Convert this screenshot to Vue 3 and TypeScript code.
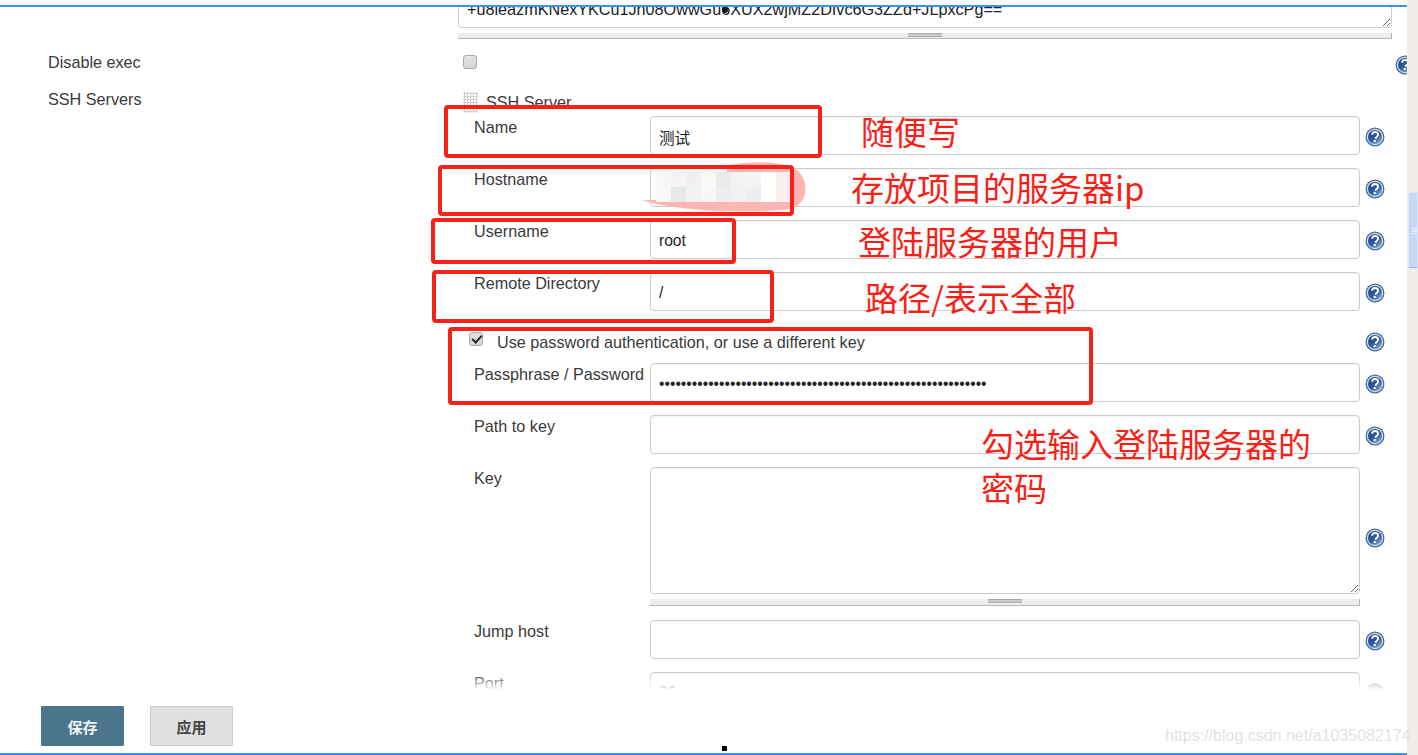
<script setup lang="ts">
interface Field { label: string; value: string }
const fieldsA: Field[] = [
  { label: 'Name', value: '测试' },
  { label: 'Hostname', value: '' },
  { label: 'Username', value: 'root' },
  { label: 'Remote Directory', value: '/' },
]
const password = 'x'.repeat(60)
const keyTail = '+u8leazmKNexYKCu1Jn08OwwGu6XUX2wjMZ2DIvc6G3ZZd+JLpxcPg=='
const boxes = [
  { x: 444, y: 105, w: 378, h: 53 },
  { x: 438, y: 165, w: 356, h: 51 },
  { x: 431, y: 218, w: 305, h: 46 },
  { x: 432, y: 270, w: 342, h: 53 },
  { x: 448, y: 327, w: 645, h: 78 },
]
const notes = [
  { x: 861, y: 107, text: '随便写' },
  { x: 851, y: 163, text: '存放项目的服务器ip' },
  { x: 858, y: 217, text: '登陆服务器的用户' },
  { x: 865, y: 273, text: '路径/表示全部' },
  { x: 981, y: 419, text: '勾选输入登陆服务器的' },
  { x: 981, y: 463, text: '密码' },
]
const mosaic = [
  '#f8f8f8', '#f5f5f5', '#f0f0f0', '#f9f9f9', '#ebebe9', '#f3f3f1', '#f2f4f6', '#ffffff', '#fdeeee',
  '#f8f8f8', '#e8e8e8', '#f2f2f2', '#f7f7f4', '#ecefef', '#f4f2f0', '#ebeff2', '#ffffff', '#fdeeee',
]
const tile = (i: number) => ({
  left: 656 + (i % 9) * 15 + 'px',
  top: 172 + Math.floor(i / 9) * 15 + 'px',
  background: mosaic[i],
})
</script>

<template>
  <div class="page">
    <svg class="defs" width="0" height="0" aria-hidden="true">
      <defs>
        <linearGradient id="hg" x1="0.2" y1="0.1" x2="0.8" y2="0.9">
          <stop offset="0" stop-color="#1f4a8c" />
          <stop offset="0.55" stop-color="#2f5c9c" />
          <stop offset="1" stop-color="#7f9fc6" />
        </linearGradient>
        <symbol id="help" viewBox="0 0 20 20">
          <circle cx="10" cy="10" r="9.5" fill="#456c9f" />
          <circle cx="10" cy="10" r="8.2" fill="#d5dfeb" />
          <circle cx="10" cy="10" r="7" fill="url(#hg)" />
          <path d="M7 7.6c.2-1.7 1.5-2.6 3.1-2.6 1.8 0 3 1.1 3 2.6 0 1.2-.7 1.8-1.5 2.4-.7.5-1 .9-1 1.7" fill="none" stroke="#fff" stroke-width="1.9" />
          <rect x="8.7" y="13" width="2" height="2" fill="#fff" />
        </symbol>
      </defs>
    </svg>

    <div class="main">
      <div class="top-gap"></div>
      <div class="rule"></div>

      <div class="viewport">
        <div class="key-top">
          <span class="key-line">{{ keyTail }}</span>
          <textarea class="key-input" readonly></textarea>
        </div>
        <div class="grippie top-grip"><span></span></div>

        <div class="section disable">
          <div class="side-label">Disable exec</div>
          <div class="side-body between">
            <input class="check" type="checkbox" />
            <svg class="help clipped"><use href="#help" /></svg>
          </div>
        </div>

        <div class="section servers">
          <div class="side-label">SSH Servers</div>
          <div class="side-body">
            <div class="ssh-head">
              <span class="dots"></span>
              <span>SSH Server</span>
            </div>
          </div>
        </div>

        <div class="fields">
          <div v-for="f in fieldsA" :key="f.label" class="field">
            <label>{{ f.label }}</label>
            <input class="text" readonly :value="f.value" />
            <svg class="help"><use href="#help" /></svg>
          </div>

          <div class="check-row">
            <input class="check" type="checkbox" checked />
            <span>Use password authentication, or use a different key</span>
            <svg class="help"><use href="#help" /></svg>
          </div>

          <div class="field">
            <label>Passphrase / Password</label>
            <input class="text" type="password" readonly :value="password" />
            <svg class="help"><use href="#help" /></svg>
          </div>
          <div class="field">
            <label>Path to key</label>
            <input class="text" readonly value="" />
            <svg class="help"><use href="#help" /></svg>
          </div>
          <div class="field tall">
            <label>Key</label>
            <div class="area-wrap">
              <textarea class="area" readonly></textarea>
              <div class="grippie"><span></span></div>
            </div>
            <svg class="help mid"><use href="#help" /></svg>
          </div>
          <div class="field">
            <label>Jump host</label>
            <input class="text" readonly value="" />
            <svg class="help"><use href="#help" /></svg>
          </div>
          <div class="field">
            <label>Port</label>
            <input class="text" readonly value="22" />
            <svg class="help"><use href="#help" /></svg>
          </div>
        </div>
        <div class="fade"></div>
      </div>

      <div class="actions">
        <button class="btn primary">保存</button>
        <button class="btn">应用</button>
      </div>
      <div class="rule"></div>
    </div>

    <div class="scrollbar">
      <div class="thumb"><i></i><i></i><i></i><i></i></div>
    </div>

    <!-- annotations drawn over the screenshot -->
    <svg class="smear" width="1418" height="755" aria-hidden="true">
      <path d="M642 200C680 213 760 213 792 209C810 201 810 176 792 167C772 160 750 162 727 165L727 172L656 172L656 200Z" fill="#ffb6b2" />
    </svg>
    <i v-for="(_, i) in mosaic" :key="i" class="tile" :style="tile(i)"></i>
    <div
      v-for="b in boxes"
      :key="b.y"
      class="box"
      :style="{ left: b.x + 'px', top: b.y + 'px', width: b.w + 'px', height: b.h + 'px' }"
    ></div>
    <div
      v-for="n in notes"
      :key="n.text"
      class="note"
      :style="{ left: n.x + 'px', top: n.y + 'px' }"
    >{{ n.text }}</div>

    <div class="mark"></div>
    <div class="caret"></div>
    <div class="watermark">https://blog.csdn.net/a1035082174</div>
  </div>
</template>

<style>
html, body { margin: 0; background: #fff; overflow: hidden; }
</style>

<style scoped>
.page {
  position: relative;
  display: flex;
  width: 1418px;
  height: 755px;
  overflow: hidden;
  background: #fff;
  color: #3a3a3a;
  font-family: "Liberation Sans", Arial, "Noto Sans CJK SC", sans-serif;
  font-size: 16.2px;
}
.defs { position: absolute; }
.main { width: 1407px; flex: none; display: flex; flex-direction: column; }
.top-gap { height: 5px; flex: none; }
.rule { height: 2px; flex: none; background: #3a93ee; }
.viewport { position: relative; height: 683px; flex: none; overflow: hidden; }

.key-top { position: relative; width: 934px; height: 40px; margin: -19px 0 0 458px; }
.key-input {
  display: block;
  box-sizing: border-box;
  width: 934px;
  height: 40px;
  padding: 0;
  border: 1px solid #ccc;
  border-radius: 4px;
  background: transparent;
  outline: none;
  resize: both;
  position: relative;
}
.key-line {
  position: absolute;
  left: 9px;
  top: 11px;
  font-size: 16.2px;
  line-height: 20px;
  color: #222;
  white-space: nowrap;
}
.grippie {
  box-sizing: border-box;
  height: 6px;
  background: #eee;
  border-bottom: 1px solid #b8b8b0;
  border-right: 1px solid #b8b8b0;
  display: flex;
  justify-content: center;
  align-items: flex-start;
}
.grippie span {
  width: 34px;
  height: 4px;
  border-top: 1px solid #aaa;
  border-bottom: 1px solid #aaa;
  box-sizing: border-box;
  background: #ccc;
}
.top-grip { width: 934px; margin: 5px 0 0 458px; }

.section { display: grid; grid-template-columns: 458px 949px; }
.side-label { padding-left: 48px; line-height: 20px; }
.side-body { min-width: 0; overflow: hidden; }
.between { display: flex; justify-content: space-between; padding-left: 5px; }
.disable { margin-top: 16px; height: 20px; }
.disable .side-label { margin-top: -3px; }
.servers { margin-top: 17px; height: 24px; overflow: visible; }
.servers .side-label { margin-top: -3px; }
.clipped { margin-right: -8px; }

.ssh-head { display: flex; align-items: center; gap: 8px; padding-left: 5px; height: 20px; }
.dots {
  width: 15px;
  height: 21px;
  flex: none;
  background-image: radial-gradient(#cfcfcf 1px, transparent 1.1px);
  background-size: 3px 3px;
}

.fields { display: flex; flex-direction: column; }
.field {
  display: grid;
  grid-template-columns: 192px 710px 20px;
  margin-left: 458px;
  margin-bottom: 13px;
  height: 39px;
}
.field label {
  padding: 1px 0 0 16px;
  line-height: 20px;
  white-space: nowrap;
}
.field .help { margin: 11px 0 0 5px; }
.help { display: block; width: 20px; height: 20px; flex: none; }
.text {
  box-sizing: border-box;
  width: 710px;
  height: 39px;
  padding: 2px 8px 0;
  border: 1px solid #ccc;
  border-radius: 4px;
  box-shadow: inset 0 1px 1px rgba(0,0,0,.05);
  font: 15.6px "Liberation Sans", Arial, "Noto Sans CJK SC", sans-serif;
  color: #222;
  outline: none;
  background: #fff;
}
.check-row {
  display: grid;
  grid-template-columns: 28px 868px 20px;
  margin: 8px 0 11px 469px;
  width: 916px;
  height: 20px;
  align-items: center;
}
.check {
  appearance: none;
  box-sizing: border-box;
  position: relative;
  width: 14px;
  height: 14px;
  margin: 0;
  border: 1px solid #aaa;
  border-radius: 3px;
  background: linear-gradient(#e4e4e4, #d4d4d4);
  flex: none;
}
.check:checked::after {
  content: "";
  position: absolute;
  left: 4px;
  top: 0;
  width: 4px;
  height: 8px;
  border: solid #222;
  border-width: 0 2px 2px 0;
  transform: rotate(42deg);
}
.check-row .check { margin-top: -6px; }

.tall { height: 139px; margin-bottom: 14px; }
.area-wrap { width: 710px; }
.area {
  display: block;
  box-sizing: border-box;
  width: 710px;
  height: 127px;
  border: 1px solid #ccc;
  border-radius: 4px;
  box-shadow: inset 0 1px 1px rgba(0,0,0,.05);
  outline: none;
  resize: both;
  background: #fff;
}
.area-wrap .grippie { margin-top: 5px; height: 7px; }
.field .help.mid { margin-top: 61px; }

.fade {
  position: absolute;
  left: 0;
  right: 0;
  bottom: 0;
  height: 17px;
  background: linear-gradient(rgba(255,255,255,0), #fff);
}
.actions { flex: 1; display: flex; gap: 26px; padding: 16px 0 0 41px; }
.btn {
  box-sizing: border-box;
  width: 83px;
  height: 40px;
  border: 1px solid #ccc;
  border-radius: 1px;
  background: #e0e0e0;
  color: #444;
  font-family: "Noto Sans CJK SC", sans-serif;
  font-size: 15px;
  font-weight: 700;
  padding: 0;
}
.btn.primary { background: #4b758b; border-color: #4b758b; color: #f2f2f2; }

.scrollbar { width: 11px; flex: none; background: #f1eeea; padding-top: 192px; }
.thumb {
  box-sizing: border-box;
  height: 76px;
  margin-left: 1px;
  background: #c6d8f8;
  border: 1px solid #dbe6fa;
  border-bottom-color: #8fb0ec;
  border-radius: 2px 0 0 2px;
  display: flex;
  flex-direction: column;
  justify-content: center;
  align-items: flex-end;
  gap: 1px;
}
.thumb i { display: block; width: 5px; height: 1px; background: #eef3fd; }

.smear { position: absolute; left: 0; top: 0; pointer-events: none; }
.tile { position: absolute; width: 15px; height: 15px; }
.box {
  position: absolute;
  box-sizing: border-box;
  border: 4px solid #f8211a;
  border-radius: 4px;
}
.note {
  position: absolute;
  font-family: "Noto Sans CJK SC", sans-serif;
  font-size: 33px;
  line-height: 48px;
  color: #fb1e16;
  white-space: nowrap;
}
.mark { position: absolute; left: 722px; top: 746px; width: 5px; height: 5px; background: #000; }
.caret { position: absolute; left: 722px; top: 7px; width: 6px; height: 6px; border-radius: 50%; background: #111; }
.watermark {
  position: absolute;
  left: 1165px;
  top: 725px;
  font-size: 16px;
  line-height: 22px;
  color: #e3e3e3;
  white-space: nowrap;
}
</style>
